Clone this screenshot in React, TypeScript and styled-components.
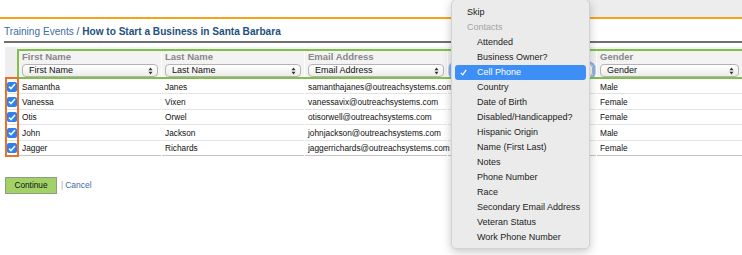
import { styled, createGlobalStyle } from 'styled-components';

const GlobalStyle = createGlobalStyle`
  html, body {
    margin: 0;
    padding: 0;
    background: #fff;
    overflow: hidden;
  }
  body {
    font-family: "Liberation Sans", Arial, Helvetica, sans-serif;
    color: #111;
  }
`;

const Page = styled.div`
  position: relative;
  width: 742px;
  height: 255px;
`;

const TopBar = styled.div`
  height: 17px;
  background: linear-gradient(90deg, #fff 62%, #ededed 80%);
  border-bottom: 2px solid #f7a21b;
`;

const Title = styled.h1`
  margin: 0 0 0 4px;
  padding: 7px 0 3px;
  font-size: 10.1px;
  line-height: 12px;
  font-weight: normal;
  color: #24507c;
  border-bottom: 2px solid #707070;
`;

const Crumb = styled.span`
  color: #3b6ea3;
`;

const Current = styled.strong`
  font-weight: bold;
`;

const TableWrap = styled.div`
  position: relative;
  margin: 4px 0 0 4px;
`;

const Grid = styled.table`
  table-layout: fixed;
  border-collapse: separate;
  border-spacing: 1px 0;
  width: 739px;
`;

const HeadCell = styled.th<{ $check?: boolean }>`
  height: 32px;
  padding: 4px 3px 2px;
  box-sizing: border-box;
  background: ${(p) => (p.$check ? '#eeeeee' : '#f3f3f3')};
  text-align: left;
  vertical-align: top;
`;

const HeadLabel = styled.div`
  font-size: 9.5px;
  line-height: 12px;
  font-weight: bold;
  color: #888;
  white-space: nowrap;
`;

const FakeSelect = styled.div<{ $focused?: boolean }>`
  position: relative;
  margin-top: 1px;
  height: 13px;
  box-sizing: border-box;
  padding-left: 6px;
  border: 1px solid #b4b4b4;
  border-radius: 4px;
  background: linear-gradient(#ffffff, #ececec);
  font-size: 9px;
  line-height: 11px;
  font-weight: normal;
  color: #111;
  white-space: nowrap;
  box-shadow: ${(p) => (p.$focused ? '0 0 0 2.5px rgba(74, 144, 240, 0.65)' : 'none')};
`;

const Arrows = styled.svg`
  position: absolute;
  right: 4px;
  top: 2px;
`;

const Cell = styled.td`
  height: 15.4px;
  box-sizing: border-box;
  padding: 1px 3px 0;
  border-bottom: 1px solid #e3e3e3;
  font-size: 8.3px;
  white-space: nowrap;
  vertical-align: middle;
`;

const LastRow = styled.tr`
  & > td {
    border-bottom-color: #c4c4c4;
  }
`;

const CheckCell = styled(Cell)`
  padding: 0;
  text-align: center;
`;

const CheckBox = styled.span`
  display: inline-flex;
  align-items: center;
  justify-content: center;
  width: 10px;
  height: 10px;
  border-radius: 2px;
  background: #2e7ff0;
  vertical-align: middle;
`;

const Annotation = styled.div<{ $color: string }>`
  position: absolute;
  border: 2px solid ${(p) => p.$color};
  box-sizing: border-box;
  pointer-events: none;
`;

const Actions = styled.div`
  display: flex;
  align-items: center;
  gap: 4px;
  margin: 21px 0 0 5px;
  font-size: 8.5px;
`;

const ContinueButton = styled.button`
  width: 52px;
  height: 17px;
  padding: 0;
  border: 1px solid #8f9d86;
  background: #a2d168;
  font-family: inherit;
  font-size: 8.3px;
  color: #111;
`;

const Divider = styled.span`
  color: #aaa;
`;

const CancelLink = styled.a`
  color: #3a6ea5;
  text-decoration: none;
  margin-left: -2px;
`;

const Menu = styled.ul`
  position: absolute;
  left: 451px;
  top: -1px;
  width: 139px;
  margin: 0;
  padding: 5px 3px 3px;
  box-sizing: border-box;
  list-style: none;
  background: #ebebeb;
  border: 1px solid #d2d2d2;
  border-radius: 5px;
  box-shadow: 0 3px 10px rgba(0, 0, 0, 0.22);
`;

const MenuItem = styled.li<{ $selected?: boolean; $group?: boolean; $indent?: boolean }>`
  position: relative;
  height: 15px;
  line-height: 15px;
  padding-left: ${(p) => (p.$indent ? '22px' : '12px')};
  border-radius: 3px;
  font-size: 9px;
  color: ${(p) => (p.$selected ? '#fff' : p.$group ? '#a3a3a3' : '#222')};
  background: ${(p) => (p.$selected ? '#3d8ff6' : 'transparent')};
  white-space: nowrap;
`;

const Tick = styled.svg`
  position: absolute;
  left: 5px;
  top: 4px;
`;

const columns = ['First Name', 'Last Name', 'Email Address', 'Cell Phone', 'Gender'];
const widths = [13, 142, 142, 142, 148, 145];

const rows = [
  ['Samantha', 'Janes', 'samanthajanes@outreachsystems.com', '', 'Male'],
  ['Vanessa', 'Vixen', 'vanessavix@outreachsystems.com', '', 'Female'],
  ['Otis', 'Orwel', 'otisorwell@outreachsystems.com', '', 'Female'],
  ['John', 'Jackson', 'johnjackson@outreachsystems.com', '', 'Male'],
  ['Jagger', 'Richards', 'jaggerrichards@outreachsystems.com', '', 'Female'],
];

const menuItems = [
  { label: 'Skip' },
  { label: 'Contacts', group: true },
  { label: 'Attended', indent: true },
  { label: 'Business Owner?', indent: true },
  { label: 'Cell Phone', indent: true, selected: true },
  { label: 'Country', indent: true },
  { label: 'Date of Birth', indent: true },
  { label: 'Disabled/Handicapped?', indent: true },
  { label: 'Hispanic Origin', indent: true },
  { label: 'Name (First Last)', indent: true },
  { label: 'Notes', indent: true },
  { label: 'Phone Number', indent: true },
  { label: 'Race', indent: true },
  { label: 'Secondary Email Address', indent: true },
  { label: 'Veteran Status', indent: true },
  { label: 'Work Phone Number', indent: true },
];

const SelectArrows = () => (
  <Arrows width="5" height="8" viewBox="0 0 5 8">
    <path d="M0.5 3.2 L2.5 0.6 L4.5 3.2 Z M0.5 4.8 L2.5 7.4 L4.5 4.8 Z" fill="#333" />
  </Arrows>
);

const Check = () => (
  <CheckBox>
    <svg width="8" height="7" viewBox="0 0 8 7">
      <path d="M1 3.6 L3 5.6 L7 1" fill="none" stroke="#fff" strokeWidth="1.5" />
    </svg>
  </CheckBox>
);

const App = () => {
  return (
    <Page>
      <GlobalStyle />
      <TopBar />
      <Title>
        <Crumb>Training Events</Crumb> / <Current>How to Start a Business in Santa Barbara</Current>
      </Title>
      <TableWrap>
        <Grid>
          <colgroup>
            {widths.map((w, i) => (
              <col key={i} style={{ width: w }} />
            ))}
          </colgroup>
          <thead>
            <tr>
              <HeadCell $check />
              {columns.map((name) => (
                <HeadCell key={name}>
                  <HeadLabel>{name}</HeadLabel>
                  <FakeSelect $focused={name === 'Cell Phone'}>
                    {name}
                    <SelectArrows />
                  </FakeSelect>
                </HeadCell>
              ))}
            </tr>
          </thead>
          <tbody>
            {rows.map((row, i) => {
              const Row = i === rows.length - 1 ? LastRow : 'tr';
              return (
                <Row key={i}>
                  <CheckCell>
                    <Check />
                  </CheckCell>
                  {row.map((value, j) => (
                    <Cell key={j}>{value}</Cell>
                  ))}
                </Row>
              );
            })}
          </tbody>
        </Grid>
        <Annotation $color="#80c04a" style={{ left: 13, top: 2, width: 730, height: 30 }} />
        <Annotation $color="#ea7125" style={{ left: 1, top: 30, width: 14, height: 80 }} />
      </TableWrap>
      <Actions>
        <ContinueButton>Continue</ContinueButton>
        <Divider>|</Divider>
        <CancelLink href="#">Cancel</CancelLink>
      </Actions>
      <Menu>
        {menuItems.map((item) => (
          <MenuItem
            key={item.label}
            $selected={item.selected}
            $group={item.group}
            $indent={item.indent}
          >
            {item.selected && (
              <Tick width="7" height="7" viewBox="0 0 7 7">
                <path d="M0.8 3.8 L2.7 5.8 L6.2 0.8" fill="none" stroke="#fff" strokeWidth="1.2" />
              </Tick>
            )}
            {item.label}
          </MenuItem>
        ))}
      </Menu>
    </Page>
  );
};

export default App;
